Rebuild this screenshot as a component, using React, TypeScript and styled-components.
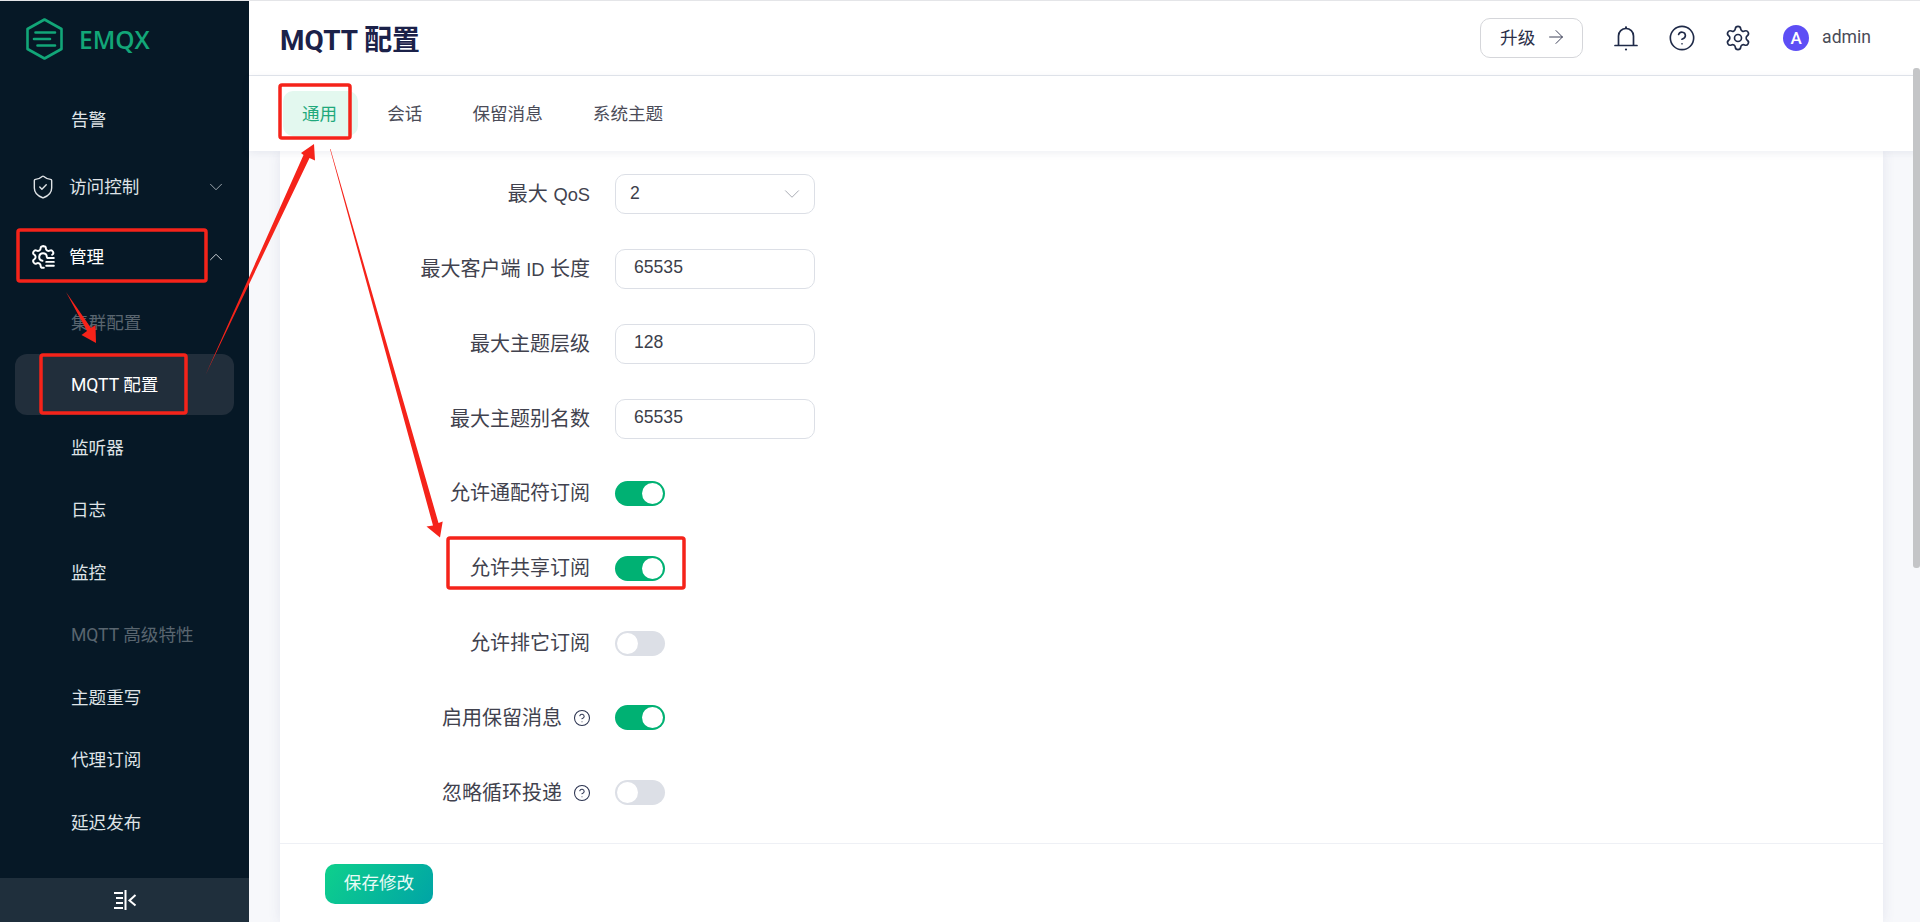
import type { ReactNode } from "react"
import styled, { createGlobalStyle } from "styled-components"
import { ArrowRight, ChevronDown, ChevronUp, CircleHelp, Settings, ShieldCheck } from "lucide-react"

const cjk = '"Noto Sans CJK SC", sans-serif'

const GlobalStyle = createGlobalStyle`
    html, body {
        margin: 0;
        height: 100%;
        overflow: hidden;
        background: #f7f8fb;
    }
    * { box-sizing: border-box; }
`

const Shell = styled.div`
    position: relative;
    display: flex;
    width: 1920px;
    height: 922px;
    overflow: hidden;
    border-top: 1px solid #e4e5e8;
    font-family: Roboto, ${cjk};
`
const Sidebar = styled.aside`
    display: flex;
    flex-direction: column;
    flex: 0 0 249px;
    background: #061826;
    color: #dfe3e6;
`
const Brand = styled.div`
    display: flex;
    align-items: flex-start;
    gap: 16px;
    height: 88px;
    padding: 17px 0 0 26px;
    font: 600 24.5px "Open Sans", sans-serif;
    color: #12a678;
    span { line-height: 44px; }
`
const Menu = styled.nav`
    flex: 1;
    overflow: hidden;
`
const GroupRow = styled.div<{ $open?: boolean }>`
    display: flex;
    align-items: center;
    height: 70px;
    padding: 0 22px 0 30px;
    font-size: 17.6px;
    color: ${p => (p.$open ? "#fff" : "#dfe3e6")};
    span { flex: 1; margin: 0 0 2px 13px; }
`
const SubItem = styled.div<{ $active?: boolean; $disabled?: boolean }>`
    display: flex;
    align-items: center;
    height: 61px;
    margin: 0 15px 1.5px;
    padding: 0 0 2px 56px;
    border-radius: 12px;
    font-size: 17.6px;
    background: ${p => (p.$active ? "#212e3b" : "transparent")};
    color: ${p => (p.$active ? "#fff" : p.$disabled ? "#59656f" : "#dfe3e6")};
`
const Collapse = styled.div`
    display: flex;
    align-items: center;
    justify-content: center;
    height: 44px;
    background: #1f2f3c;
`
const Main = styled.main`
    position: relative;
    display: flex;
    flex-direction: column;
    flex: 1;
    min-width: 0;
`
const Header = styled.header`
    display: flex;
    align-items: center;
    height: 75px;
    padding: 0 49px 0 31px;
    background: #fff;
    border-bottom: 1px solid #e3e6ec;
`
const Title = styled.h1`
    flex: 1;
    margin: 0;
    font-size: 27.9px;
    font-weight: 700;
    color: #1b2149;
`
const UpgradeButton = styled.button`
    display: flex;
    align-items: center;
    gap: 10px;
    width: 103px;
    height: 40px;
    margin-right: 15px;
    padding: 0 0 3px 19px;
    border: 1px solid #d5d6da;
    border-radius: 10px;
    background: #fff;
    font: 17.6px Roboto, ${cjk};
    color: #2c3049;
`
const IconSlot = styled.span`
    display: flex;
    justify-content: center;
    width: 56px;
    color: #1f2a48;
`
const Avatar = styled.span`
    display: flex;
    align-items: center;
    justify-content: center;
    width: 26px;
    height: 26px;
    margin-left: 17px;
    border-radius: 50%;
    background: #5d4ef5;
    color: #fff;
    font-size: 17px;
    font-weight: 500;
`
const UserName = styled.span`
    margin: 0 0 2px 13px;
    font-size: 17.6px;
    color: #4a4b57;
`
const Tabs = styled.div`
    position: relative;
    z-index: 1;
    display: flex;
    align-items: center;
    gap: 10px;
    height: 75px;
    padding-left: 34px;
    background: #fff;
    box-shadow: 0 2px 8px rgba(40, 50, 100, 0.08);
`
const Tab = styled.div<{ $active?: boolean }>`
    display: flex;
    align-items: center;
    height: 45px;
    padding: 0 21px 2px 19px;
    border-radius: 10px;
    font-size: 17.6px;
    background: ${p => (p.$active ? "#e3f8ef" : "transparent")};
    color: ${p => (p.$active ? "#1fa97c" : "#4b4c58")};
`
const Content = styled.div`
    flex: 1;
    min-height: 0;
    padding: 0 37px 0 31px;
    background: #f7f8fb;
`
const Card = styled.section`
    background: #fff;
    height: 100%;
    box-shadow: 0 0 12px rgba(60, 70, 130, 0.1);
`
const Form = styled.div`
    display: flex;
    flex-direction: column;
    gap: 34.85px;
    padding: 23px 0 30px;
    border-bottom: 1px solid #eef0f5;
`
const Row = styled.div`
    display: flex;
    align-items: center;
    gap: 25px;
    height: 40px;
`
const Label = styled.label`
    display: flex;
    align-items: center;
    justify-content: flex-end;
    gap: 11px;
    width: 310px;
    padding-bottom: 3px;
    font: 20px "Liberation Sans", ${cjk};
    color: #41424e;
    white-space: pre;
    svg { margin: 3px -1px 0 0; }
`
const Latin = styled.span`
    font-size: 18.3px;
`
const Field = styled.div<{ $select?: boolean }>`
    display: flex;
    align-items: center;
    justify-content: space-between;
    width: 200px;
    height: 40px;
    padding: 0 9px 2px ${p => (p.$select ? "14px" : "18px")};
    border: 1px solid #dcdfe6;
    border-radius: 10px;
    font: 17.6px "Liberation Sans", sans-serif;
    color: #3d3f4b;
    svg { margin-top: 2px; }
`
const Switch = styled.div<{ $on?: boolean }>`
    display: flex;
    justify-content: ${p => (p.$on ? "flex-end" : "flex-start")};
    align-items: center;
    width: 50px;
    height: 25px;
    padding: 2px;
    border-radius: 13px;
    background: ${p => (p.$on ? "#00b173" : "#dcdfe6")};
    &::after {
        content: "";
        width: 21px;
        height: 21px;
        border-radius: 50%;
        background: #fff;
    }
`
const Footer = styled.div`
    padding: 20px 45px;
`
const SaveButton = styled.button`
    width: 108px;
    height: 40px;
    padding: 0 0 4px;
    border: 0;
    border-radius: 10px;
    background: linear-gradient(125deg, #0ed08c, #00a4a6);
    font: 17.6px Roboto, ${cjk};
    color: #e8fbf6;
`
const Scrollbar = styled.div`
    position: absolute;
    top: 67px;
    right: 0;
    width: 7px;
    height: 500px;
    border-radius: 3px;
    background: #c4c5c7;
    z-index: 2;
`
const Annotations = styled.svg`
    position: absolute;
    top: -1px;
    left: 0;
    z-index: 5;
    pointer-events: none;
`

function HexLogo() {
    return (
        <svg width="37" height="42" viewBox="0 0 37 42" fill="none" stroke="#12a678" strokeWidth="2.6" strokeLinecap="round">
            <path d="M18.5 1.5 35.5 11v20l-17 9.5L1.500 31V11z" strokeLinejoin="round" />
            <path d="M9.500 14.500H29M8 21h16M11.500 27.500H29" />
        </svg>
    )
}

function ManageIcon() {
    return (
        <svg width="26" height="26" viewBox="0 0 24 24" fill="none" stroke="#fff" strokeWidth="1.800" strokeLinecap="round" strokeLinejoin="round">
            <path d="M12.220 2h-.44a2 2 0 0 0-2 2v.18a2 2 0 0 1-1 1.730l-.43.25a2 2 0 0 1-2 0l-.15-.08a2 2 0 0 0-2.730.73l-.22.38a2 2 0 0 0 .73 2.730l.15.1a2 2 0 0 1 1 1.720v.51a2 2 0 0 1-1 1.740l-.15.09a2 2 0 0 0-.73 2.730l.22.38a2 2 0 0 0 2.730.73l.15-.08a2 2 0 0 1 2 0l.43.25a2 2 0 0 1 1 1.730V20a2 2 0 0 0 2 2h1" />
            <path d="M12.220 2h.44a2 2 0 0 1 2 2v.18a2 2 0 0 0 1 1.730l.43.25a2 2 0 0 0 2 0l.15-.08a2 2 0 0 1 2.730.73l.22.38a2 2 0 0 1-.73 2.730" />
            <path d="M15.500 12a3.500 3.500 0 1 0-4 3.500" />
            <path d="M16 13h6M15 16.500h7M15 20h7" />
        </svg>
    )
}

function CollapseIcon() {
    return (
        <svg width="24" height="20" viewBox="0 0 24 20" fill="none" stroke="#fff" strokeWidth="2">
            <path d="M1 3h9M3 8h7M3 13h7M1 18h9M12.500 0v20M22.500 5l-6 5.500 6 5" />
        </svg>
    )
}

function BellIcon() {
    return (
        <svg width="24" height="26" viewBox="0 0 24 26" fill="none" stroke="currentColor" strokeWidth="1.700" strokeLinecap="round">
            <path d="M4.500 20V11a7.500 7.500 0 0 1 15 0v9" />
            <path d="M1 20.500h22" />
            <circle cx="12" cy="2.300" r="1.100" fill="currentColor" stroke="none" />
            <circle cx="12" cy="24.500" r="1.100" fill="currentColor" stroke="none" />
        </svg>
    )
}

const subTop = [
    { name: "集群配置", disabled: true },
    { name: "MQTT 配置", active: true },
    { name: "监听器" },
    { name: "日志" },
    { name: "监控" },
    { name: "MQTT 高级特性", disabled: true },
    { name: "主题重写" },
    { name: "代理订阅" },
    { name: "延迟发布" },
]

const fields: { id: string; label: ReactNode; value: string; select?: boolean }[] = [
    { id: "qos", label: <span>最大 <Latin>QoS</Latin></span>, value: "2", select: true },
    { id: "clientid", label: <span>最大客户端 <Latin>ID</Latin> 长度</span>, value: "65535" },
    { id: "levels", label: "最大主题层级", value: "128" },
    { id: "alias", label: "最大主题别名数", value: "65535" },
]

const switches = [
    { label: "允许通配符订阅", on: true },
    { label: "允许共享订阅", on: true },
    { label: "允许排它订阅", on: false },
    { label: "启用保留消息", on: true, help: true },
    { label: "忽略循环投递", on: false, help: true },
]

export default function App() {
    return (
        <Shell>
            <GlobalStyle />
            <Sidebar>
                <Brand>
                    <HexLogo />
                    <span>EMQX</span>
                </Brand>
                <Menu>
                    <SubItem>告警</SubItem>
                    <GroupRow>
                        <ShieldCheck size={26} strokeWidth={1.3} />
                        <span>访问控制</span>
                        <ChevronDown size={22} strokeWidth={1} color="#a9b1b8" />
                    </GroupRow>
                    <GroupRow $open>
                        <ManageIcon />
                        <span>管理</span>
                        <ChevronUp size={22} strokeWidth={1} color="#dfe3e6" />
                    </GroupRow>
                    {subTop.map(item => (
                        <SubItem key={item.name} $active={item.active} $disabled={item.disabled}>{item.name}</SubItem>
                    ))}
                </Menu>
                <Collapse><CollapseIcon /></Collapse>
            </Sidebar>
            <Main>
                <Header>
                    <Title>MQTT 配置</Title>
                    <UpgradeButton>升级 <ArrowRight size={22} strokeWidth={1} /></UpgradeButton>
                    <IconSlot><BellIcon /></IconSlot>
                    <IconSlot><CircleHelp size={28} strokeWidth={1.4} /></IconSlot>
                    <IconSlot><Settings size={28} strokeWidth={1.4} /></IconSlot>
                    <Avatar>A</Avatar>
                    <UserName>admin</UserName>
                </Header>
                <Tabs>
                    <Tab $active>通用</Tab>
                    <Tab>会话</Tab>
                    <Tab>保留消息</Tab>
                    <Tab>系统主题</Tab>
                </Tabs>
                <Content>
                    <Card>
                        <Form>
                            {fields.map(f => (
                                <Row key={f.id}>
                                    <Label>{f.label}</Label>
                                    <Field $select={f.select}>
                                        {f.value}
                                        {f.select && <ChevronDown size={26} strokeWidth={0.9} color="#a8abb3" />}
                                    </Field>
                                </Row>
                            ))}
                            {switches.map(s => (
                                <Row key={s.label}>
                                    <Label>
                                        {s.label}
                                        {s.help && <CircleHelp size={18} strokeWidth={1.4} color="#2b3350" />}
                                    </Label>
                                    <Switch $on={s.on} />
                                </Row>
                            ))}
                        </Form>
                        <Footer><SaveButton>保存修改</SaveButton></Footer>
                    </Card>
                </Content>
                <Scrollbar />
            </Main>
            <Annotations width="1920" height="922" viewBox="0 0 1920 922">
                <g fill="none" stroke="#f5231a" strokeWidth="3.500" strokeLinejoin="round">
                    <rect x="280" y="85" width="70" height="53" rx="2" />
                    <rect x="18" y="230" width="188" height="51" rx="2" />
                    <rect x="41" y="355" width="145" height="58" rx="2" />
                    <rect x="448" y="538" width="236" height="50" rx="2" />
                </g>
                <g fill="#f5231a">
                    <polygon points="66,292 91,328 95.500,325 96,343 81.500,335 87,331" />
                    <polygon points="205.500,375 303.500,155 301,153 314,144 315,160.500 309.500,158" />
                    <polygon points="330,149 330.500,149 438.500,523 442.700,521.500 440,537.500 426.500,526.500 433,525.500" />
                </g>
            </Annotations>
        </Shell>
    )
}
